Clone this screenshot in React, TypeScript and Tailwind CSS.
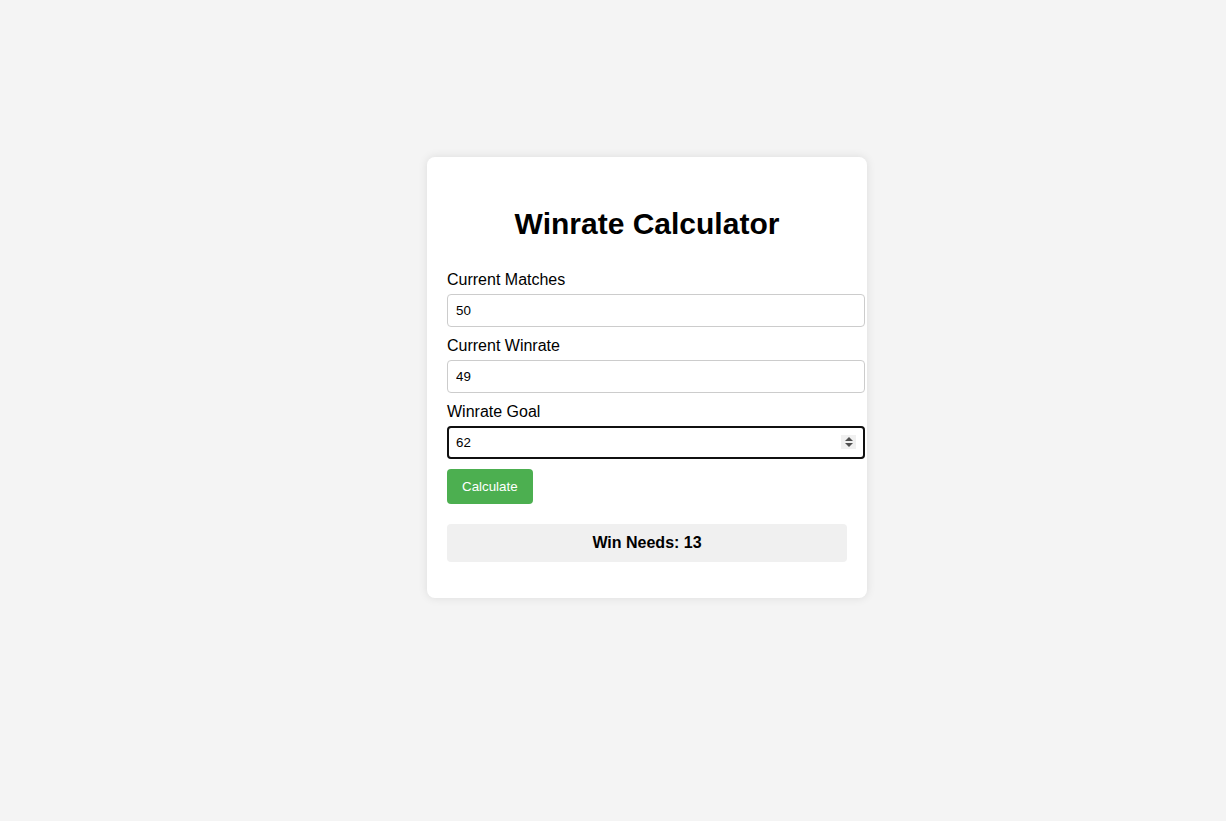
import { useState } from 'react';

const font = { fontFamily: '"Liberation Sans", Arial, sans-serif' };

export default function App() {
  const [matches, setMatches] = useState('50');
  const [winrate, setWinrate] = useState('49');
  const [goal, setGoal] = useState('62');
  const [result, setResult] = useState(13);

  const calculate = () => {
    const m = Number(matches);
    const w = (Number(winrate) / 100) * m;
    const g = Number(goal) / 100;
    if (g >= 1) return;
    setResult(Math.ceil((g * m - w) / (1 - g)));
  };

  const inputCls =
    'block w-[418px] h-[33px] px-2 mb-[10px] border border-[#cccccc] rounded bg-white text-[13.33px] text-black outline-none [appearance:textfield] [&::-webkit-inner-spin-button]:appearance-none [&::-webkit-outer-spin-button]:appearance-none';

  return (
    <div className="min-h-screen bg-[#f4f4f4] pt-[157px] pl-[427px]" style={font}>
      <div className="w-[440px] bg-white rounded-lg shadow-[0_0_10px_rgba(0,0,0,0.1)] px-5 pt-5 pb-9">
        <h1 className="mt-[28px] mb-[29px] text-[30px] leading-[37px] font-bold text-center text-black">
          Winrate Calculator
        </h1>

        <label className="block text-base leading-[18px] mb-[5px] text-black">Current Matches</label>
        <input
          type="number"
          value={matches}
          onChange={(e) => setMatches(e.target.value)}
          className={inputCls}
          style={font}
        />

        <label className="block text-base leading-[18px] mb-[5px] text-black">Current Winrate</label>
        <input
          type="number"
          value={winrate}
          onChange={(e) => setWinrate(e.target.value)}
          className={inputCls}
          style={font}
        />

        <label className="block text-base leading-[18px] mb-[5px] text-black">Winrate Goal</label>
        <div className="relative w-[418px]">
          <input
            type="number"
            value={goal}
            onChange={(e) => setGoal(e.target.value)}
            className={`${inputCls} outline-2 outline-offset-[-2px] outline-[#101010]`}
            style={{ ...font, outlineStyle: 'solid' }}
          />
          <div className="absolute left-[394px] top-[9px] w-[15px] h-[14px] bg-[#f0f0f0] flex flex-col items-center justify-center gap-[2px]">
            <svg width="8" height="4" viewBox="0 0 8 4">
              <path d="M0 4 L4 0 L8 4 Z" fill="#505050" />
            </svg>
            <svg width="8" height="4" viewBox="0 0 8 4">
              <path d="M0 0 L8 0 L4 4 Z" fill="#505050" />
            </svg>
          </div>
        </div>

        <button
          onClick={calculate}
          className="block h-[35px] px-[15px] bg-[#4caf50] text-white text-[13.33px] rounded"
          style={font}
        >
          Calculate
        </button>

        <div className="mt-5 w-[400px] h-[38px] flex items-center justify-center bg-[#f0f0f0] rounded text-base font-bold text-black">
          Win Needs: {result}
        </div>
      </div>
    </div>
  );
}
